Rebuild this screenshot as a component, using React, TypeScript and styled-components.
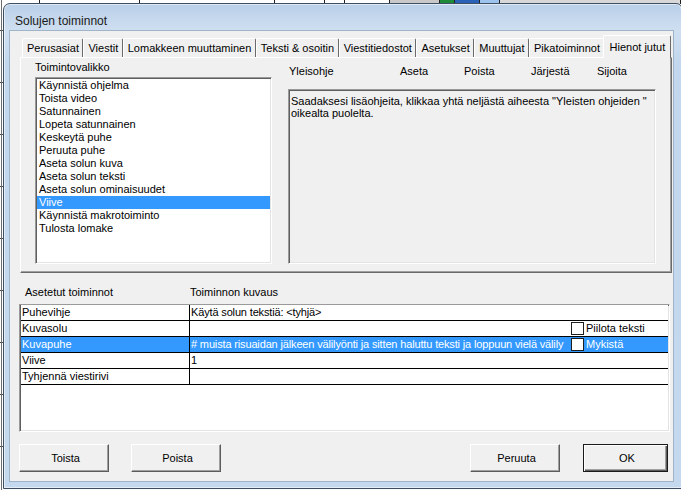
import React from "react";
import styled, { createGlobalStyle, css } from "styled-components";

const GlobalStyle = createGlobalStyle`
  html, body { margin: 0; padding: 0; }
  body {
    width: 681px;
    height: 490px;
    overflow: hidden;
    background: #ffffff;
    font-family: "Liberation Sans", Arial, sans-serif;
    font-size: 11px;
    color: #000;
  }
  * { box-sizing: border-box; }
`;

const Desktop = styled.div`
  position: relative;
  width: 681px;
  height: 490px;
  overflow: hidden;
  background: #fbfbfb;
`;

/* ---------- the application behind the dialog ---------- */
const BackRow = styled.div`
  position: absolute;
  left: 0;
  top: -9px;
  width: 681px;
  height: 13px;
  display: flex;
  border-bottom: 1px solid #333;
`;

const BackCell = styled.div<{ $w: number; $bg?: string }>`
  width: ${(p) => p.$w}px;
  height: 13px;
  border-right: 1px solid #222;
  background: ${(p) => p.$bg || "#fff"};
`;

const BackSide = styled.div`
  position: absolute;
  left: 0;
  top: 0;
  width: 4px;
  height: 490px;
  background:
    linear-gradient(90deg, transparent 1px, #6d6d6d 1px, #6d6d6d 2px, transparent 2px),
    repeating-linear-gradient(180deg, #fff 0 30px, #444 30px 31px, #fff 31px 52px);
`;

/* ---------- window frame ---------- */
const Window = styled.div`
  position: absolute;
  left: 3px;
  top: 3px;
  width: 680px;
  height: 486px;
  border: 1px solid #3f4f62;
  border-radius: 7px 7px 0 0;
  background: linear-gradient(180deg, #b9d0e9 0px, #c8daee 18px, #cfdff1 27px, #c2d7ed 60px, #c4d8ee 100%);
  box-shadow: inset 0 0 0 1px rgba(255, 255, 255, 0.55);
  display: flex;
  flex-direction: column;
  padding: 0 9px 7px 6px;
`;

const TitleBar = styled.div`
  height: 27px;
  display: flex;
  align-items: center;
  padding-left: 5px;
  padding-top: 6px;
`;

const Title = styled.span`
  font-family: "Liberation Sans", Arial, sans-serif;
  font-size: 12px;
  color: #1a1a1a;
`;

const Client = styled.div`
  width: 663px;
  height: 450px;
  background: #f0f0f0;
  display: flex;
  flex-direction: column;
  padding: 4px 0 9px 9px;
  outline: 1px solid #9fb3c9;
`;

/* ---------- tab control ---------- */
const Tabs = styled.div`
  margin: 0 1px 0 1px;
  display: flex;
  flex-direction: column;
`;

const TabStrip = styled.div`
  height: 22px;
  display: flex;
  align-items: flex-end;
  padding-left: 2px;
  position: relative;
  z-index: 2;
`;

const Tab = styled.div<{ $active?: boolean }>`
  height: 19px;
  padding: 3px 3.5px 0 4px;
  line-height: 13px;
  white-space: nowrap;
  background: #f0f0f0;
  border-top: 1px solid #ffffff;
  border-left: 1px solid #ffffff;
  border-right: 1px solid #6a6a6a;
  border-radius: 2px 2px 0 0;
  ${(p) =>
    p.$active &&
    css`
      height: 23px;
      margin: 0 -2px -1px -2px;
      padding: 5px 5px 0 6px;
      position: relative;
      z-index: 3;
    `}
`;

const TabPanel = styled.div`
  height: 216px;
  border: 1px solid;
  border-color: #ffffff #6a6a6a #6a6a6a #ffffff;
  box-shadow: inset -1px -1px 0 #a0a0a0;
  display: flex;
  padding: 3px 0 0 14px;
  gap: 16px;
`;

const LeftCol = styled.div`
  width: 237px;
  display: flex;
  flex-direction: column;
`;

const RightCol = styled.div`
  width: 368px;
  display: flex;
  flex-direction: column;
  padding-top: 4px;
`;

const GroupLabel = styled.div`
  height: 13px;
  line-height: 13px;
`;

const sunken = css`
  border: 1px solid;
  border-color: #9a9a9a #ffffff #ffffff #9a9a9a;
  box-shadow: inset 1px 1px 0 #5f5f5f, inset -1px -1px 0 #e3e3e3;
`;

const ListBox = styled.div`
  ${sunken};
  margin-top: 3px;
  height: 187px;
  background: #ffffff;
  padding: 1px;
`;

const ListItem = styled.div<{ $selected?: boolean }>`
  height: 13px;
  line-height: 13px;
  padding-left: 2px;
  white-space: nowrap;
  background: ${(p) => (p.$selected ? "#3399ff" : "transparent")};
  color: ${(p) => (p.$selected ? "#ffffff" : "#000000")};
`;

const HelpHeaders = styled.div`
  height: 13px;
  line-height: 13px;
  display: grid;
  grid-template-columns: 111px 64px 67px 66px auto;
  padding-left: 1px;
`;

const HelpLink = styled.span`
  white-space: nowrap;
`;

const HelpBox = styled.div`
  ${sunken};
  margin-top: 11px;
  height: 175px;
  background: #f0f0f0;
  padding: 5px 4px 0 2px;
  line-height: 12px;
`;

/* ---------- assigned actions grid ---------- */
const GridHeader = styled.div`
  margin-top: 12px;
  height: 15px;
  line-height: 15px;
  display: flex;
  padding-left: 6px;
`;

const GridHeaderLabel = styled.div<{ $w?: number }>`
  width: ${(p) => (p.$w ? `${p.$w}px` : "auto")};
  white-space: nowrap;
`;

const Grid = styled.div`
  ${sunken};
  margin: 4px 3px 0 0;
  height: 128px;
  background: #ffffff;
  padding: 0 1px 1px 1px;
`;

const Row = styled.div<{ $selected?: boolean }>`
  height: 16px;
  display: flex;
  border-bottom: 1px solid #000;
  background: ${(p) => (p.$selected ? "#3399ff" : "#ffffff")};
  color: ${(p) => (p.$selected ? "#ffffff" : "#000000")};
`;

const NameCell = styled.div`
  width: 169px;
  border-right: 1px solid #000;
  padding-left: 1px;
  line-height: 15px;
  white-space: nowrap;
  overflow: hidden;
`;

const DescCell = styled.div`
  flex: 1;
  display: flex;
  min-width: 0;
`;

const DescText = styled.div`
  flex: 1;
  min-width: 0;
  margin-left: 1px;
  margin-right: 6px;
  line-height: 15px;
  letter-spacing: -0.15px;
  white-space: nowrap;
  overflow: hidden;
`;

const CheckOption = styled.div`
  width: 97px;
  display: flex;
  align-items: center;
  gap: 2px;
`;

const CheckBox = styled.span`
  width: 13px;
  height: 13px;
  border: 1px solid #1e1e1e;
  background: #ffffff;
  flex: none;
`;

const CheckLabel = styled.span`
  line-height: 15px;
  white-space: nowrap;
`;

/* ---------- buttons ---------- */
const ButtonBar = styled.div`
  margin-top: 12px;
  height: 28px;
  display: flex;
  padding-right: 5px;
`;

const Spacer = styled.div`
  flex: 1;
`;

const Button = styled.div<{ $w?: number; $default?: boolean; $gap?: number }>`
  width: ${(p) => p.$w ?? 90}px;
  height: 28px;
  margin-left: ${(p) => p.$gap ?? 0}px;
  display: flex;
  align-items: center;
  justify-content: center;
  padding-left: 3px;
  background: #f0f0f0;
  border: 1px solid;
  border-color: #ffffff #5c5c5c #5c5c5c #ffffff;
  box-shadow: inset -1px -1px 0 #a0a0a0;
  ${(p) =>
    p.$default &&
    css`
      border-color: #1a1a1a;
      box-shadow: inset 1px 1px 0 #ffffff, inset -1px -1px 0 #5c5c5c, inset -2px -2px 0 #a0a0a0;
    `}
`;

const tabs = [
  "Perusasiat",
  "Viestit",
  "Lomakkeen muuttaminen",
  "Teksti & osoitin",
  "Viestitiedostot",
  "Asetukset",
  "Muuttujat",
  "Pikatoiminnot",
  "Hienot jutut",
];

const actions = [
  "Käynnistä ohjelma",
  "Toista video",
  "Satunnainen",
  "Lopeta satunnainen",
  "Keskeytä puhe",
  "Peruuta puhe",
  "Aseta solun kuva",
  "Aseta solun teksti",
  "Aseta solun ominaisuudet",
  "Viive",
  "Käynnistä makrotoiminto",
  "Tulosta lomake",
];

const helpLinks = ["Yleisohje", "Aseta", "Poista", "Järjestä", "Sijoita"];

type GridRow = { name: string; desc: string; check?: string; selected?: boolean };

const rows: GridRow[] = [
  { name: "Puhevihje", desc: "Käytä solun tekstiä: <tyhjä>" },
  { name: "Kuvasolu", desc: "", check: "Piilota teksti" },
  {
    name: "Kuvapuhe",
    desc: "# muista risuaidan jälkeen välilyönti ja sitten haluttu teksti ja loppuun vielä välily",
    check: "Mykistä",
    selected: true,
  },
  { name: "Viive", desc: "1" },
  { name: "Tyhjennä viestirivi", desc: "" },
];

export default function App() {
  return (
    <>
      <GlobalStyle />
      <Desktop>
        <BackRow>
          <BackCell $w={40} />
          <BackCell $w={100} />
          <BackCell $w={135} />
          <BackCell $w={50} />
          <BackCell $w={20} />
          <BackCell $w={45} />
          <BackCell $w={50} $bg="#c9c9c9" />
          <BackCell $w={15} $bg="#1f8a3a" />
          <BackCell $w={25} $bg="#2a62b8" />
          <BackCell $w={20} $bg="#9cc4ee" />
          <BackCell $w={181} $bg="#d8d8d8" />
        </BackRow>
        <BackSide />
        <Window>
          <TitleBar>
            <Title>Solujen toiminnot</Title>
          </TitleBar>
          <Client>
            <Tabs>
              <TabStrip>
                {tabs.map((t) => (
                  <Tab key={t} $active={t === "Hienot jutut"}>
                    {t}
                  </Tab>
                ))}
              </TabStrip>
              <TabPanel>
                <LeftCol>
                  <GroupLabel>Toimintovalikko</GroupLabel>
                  <ListBox>
                    {actions.map((a) => (
                      <ListItem key={a} $selected={a === "Viive"}>
                        {a}
                      </ListItem>
                    ))}
                  </ListBox>
                </LeftCol>
                <RightCol>
                  <HelpHeaders>
                    {helpLinks.map((h) => (
                      <HelpLink key={h}>{h}</HelpLink>
                    ))}
                  </HelpHeaders>
                  <HelpBox>
                    Saadaksesi lisäohjeita, klikkaa yhtä neljästä aiheesta "Yleisten ohjeiden "
                    oikealta puolelta.
                  </HelpBox>
                </RightCol>
              </TabPanel>
            </Tabs>

            <GridHeader>
              <GridHeaderLabel $w={165}>Asetetut toiminnot</GridHeaderLabel>
              <GridHeaderLabel>Toiminnon kuvaus</GridHeaderLabel>
            </GridHeader>
            <Grid>
              {rows.map((r) => (
                <Row key={r.name} $selected={r.selected}>
                  <NameCell>{r.name}</NameCell>
                  <DescCell>
                    <DescText>{r.desc}</DescText>
                    {r.check && (
                      <CheckOption>
                        <CheckBox />
                        <CheckLabel>{r.check}</CheckLabel>
                      </CheckOption>
                    )}
                  </DescCell>
                </Row>
              ))}
            </Grid>

            <ButtonBar>
              <Button>Toista</Button>
              <Button $gap={22}>Poista</Button>
              <Spacer />
              <Button>Peruuta</Button>
              <Button $gap={23} $w={85} $default>
                OK
              </Button>
            </ButtonBar>
          </Client>
        </Window>
      </Desktop>
    </>
  );
}
